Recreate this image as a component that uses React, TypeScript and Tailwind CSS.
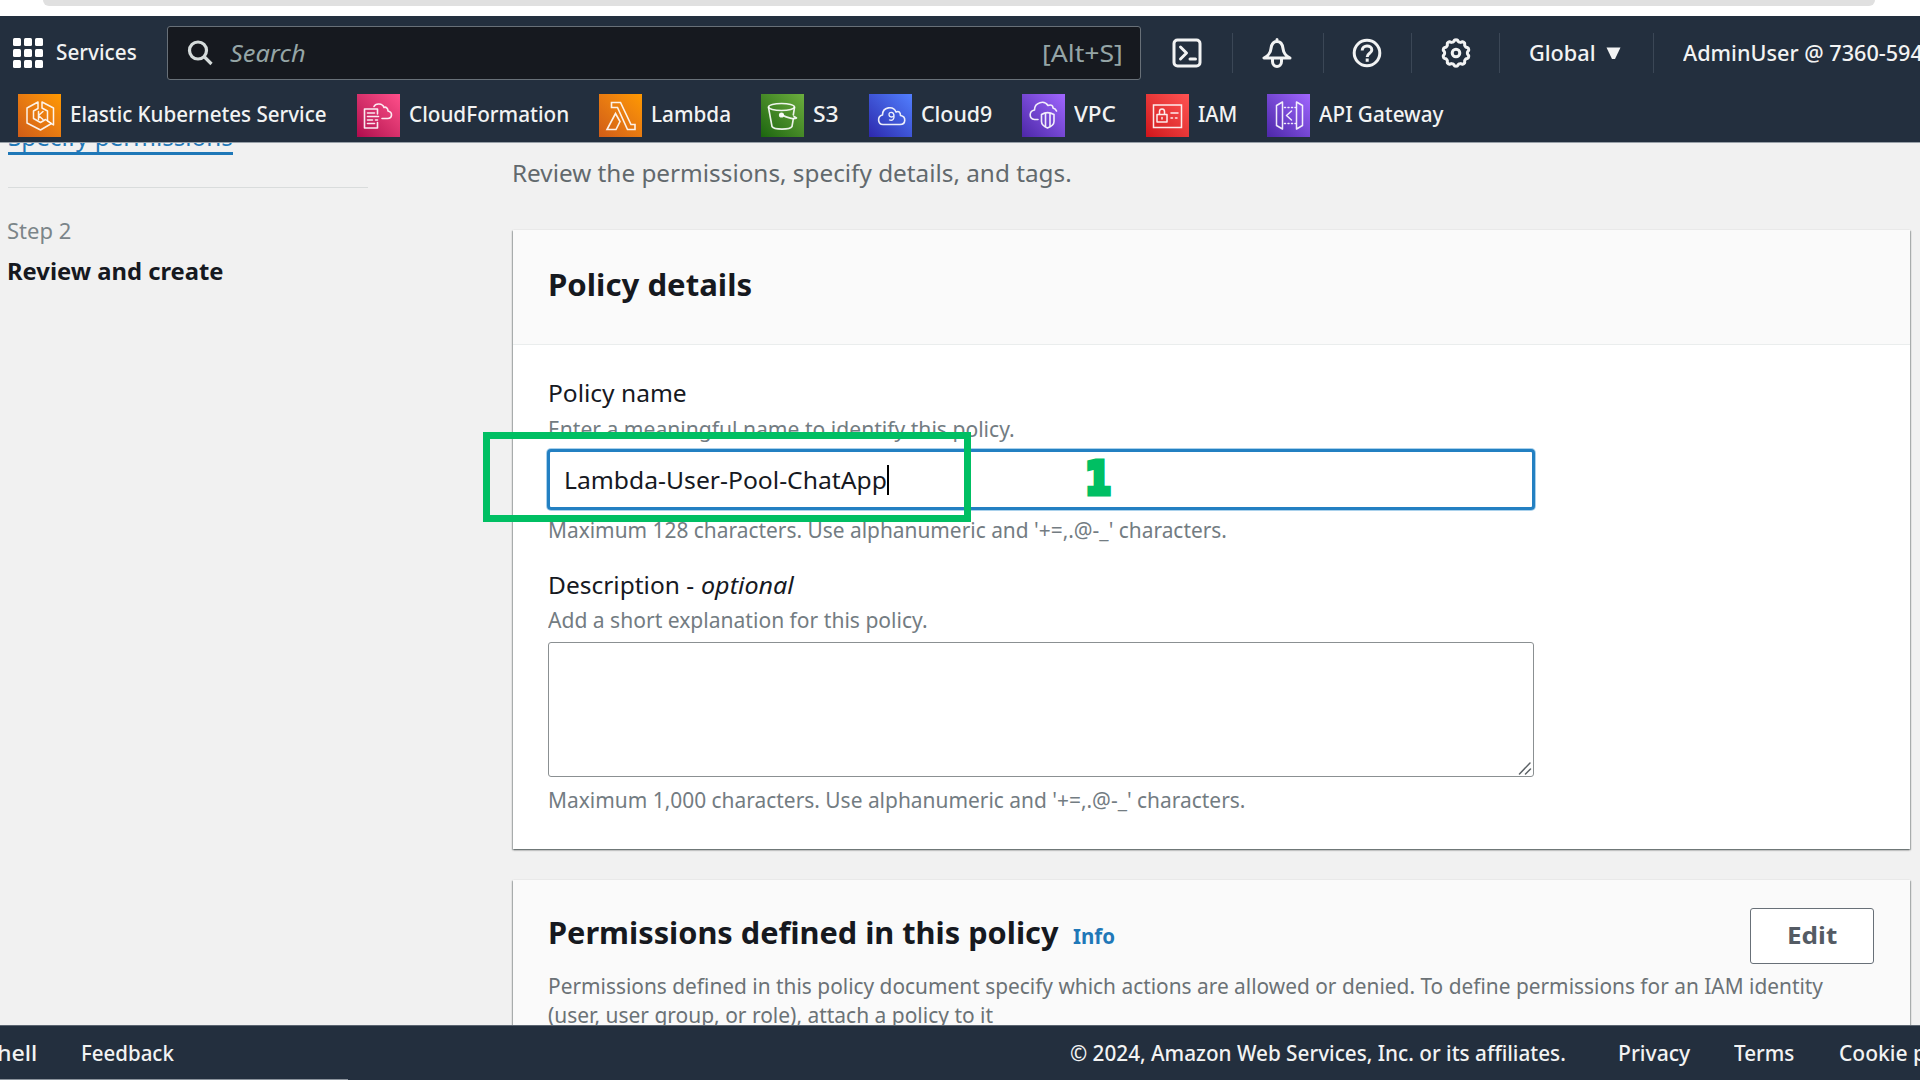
import { useLayoutEffect, useRef, useState, type ReactNode } from 'react';

/** Single line of text condensed or widened to fill the width of its box. */
function Fit({ className = '', children }: { className?: string; children: ReactNode }) {
  const box = useRef<HTMLSpanElement>(null);
  const inner = useRef<HTMLSpanElement>(null);
  const [scale, setScale] = useState(1);
  useLayoutEffect(() => {
    if (box.current && inner.current) {
      setScale(box.current.clientWidth / inner.current.offsetWidth);
    }
  }, []);
  return (
    <span ref={box} className={`block shrink-0 whitespace-nowrap ${className}`}>
      <span ref={inner} className="inline-block origin-left" style={{ transform: `scaleX(${scale})` }}>
        {children}
      </span>
    </span>
  );
}

const line = { fill: 'none', stroke: 'currentColor', strokeLinejoin: 'round', strokeLinecap: 'round' } as const;

function EksIcon() {
  return (
    <svg viewBox="0 0 43 43" className="size-[43px]" {...line} strokeWidth="1.5">
      <path d="M20 8 9 14v15l13.500 7 11-6.500-6-4-5 3-7-4V17l4.500-2.500z" />
      <path d="M24 8l11.500 6v17l-6-4V17L24 14z" />
      <path d="M20.500 17.500v8M25 17.500l-4.500 4 4.500 4" />
    </svg>
  );
}
function CloudFormationIcon() {
  return (
    <svg viewBox="0 0 43 43" className="size-[43px]" {...line} strokeWidth="1.6">
      <path d="M20.500 20V15H7.500V34H20.500V28.500" />
      <path d="M10.500 19h7M10.500 22.500h11M10.500 26h5M18.500 26h2M10.500 29.500h7" />
      <path d="M17 12.500c1.500-3.500 8.500-3.500 10 1 1.500-1 4 .5 4 3.500 5 1 4.500 7.500-.5 7.500H25" />
    </svg>
  );
}
function LambdaIcon() {
  return (
    <svg viewBox="0 0 43 43" className="size-[43px]" {...line} strokeWidth="1.6" strokeLinejoin="miter">
      <path d="M12.500 8.500h9l10.500 22h4v5h-7.500L18.500 13.500h-6z" />
      <path d="M16.500 19.500 21 27.500 17 35.500H8z" />
    </svg>
  );
}
function S3Icon() {
  return (
    <svg viewBox="0 0 43 43" className="size-[43px]" {...line} strokeWidth="1.6">
      <ellipse cx="20.500" cy="13" rx="13" ry="3.500" />
      <path d="M7.500 13.500 11 32.500c2 3.500 18 3.500 20 0l1.300-7.500M33.500 13.500 32.300 21" />
      <circle cx="20.500" cy="21" r="1.800" fill="currentColor" />
      <path d="M21 21c5 2.500 12 4.500 14.500 3L33 22.500" />
    </svg>
  );
}
function Cloud9Icon() {
  return (
    <svg viewBox="0 0 43 43" className="size-[43px]" {...line} strokeWidth="1.6">
      <path d="M14 30.500c-5.500 0-6-8.500-.5-9.500 0-8.500 11-9.500 13.500-3 3-1.500 4.500.5 4.500 3.500 6 1 5.500 9-.5 9z" />
      <path d="M20.500 26c3 1 5-1 4.500-4.500-.3-4-5-4-5-1s4.500 3.500 5 .5" strokeWidth="1.300" />
    </svg>
  );
}
function VpcIcon() {
  return (
    <svg viewBox="0 0 43 43" className="size-[43px]" {...line} strokeWidth="1.600">
      <path d="M16 25.500h-3.500c-6-1-5.500-8.500 0-9.500 0-8 10-10 13.500-4.500 3.500-1.500 5 .5 5 2.500 2 .5 3 1.500 3.500 3" />
      <path d="M19.500 20.500c4-2.500 8-2.500 12.500 0v7c0 3-2.500 5-6.500 6.500-3.500-1.500-6-3.500-6-6.500z" />
      <path d="M23.500 20v12M28 20v12" />
    </svg>
  );
}
function IamIcon() {
  return (
    <svg viewBox="0 0 43 43" className="size-[43px]" {...line} strokeWidth="1.500">
      <path d="M7.500 11h28v22.500h-28z" strokeLinejoin="miter" />
      <path d="M11 20.500h10V28H11zM13.500 20.500v-3c0-3.500 5-3.500 5 0v3M16 23.500v1.500" />
      <path d="M25 19h7M25 24h1.500M29.500 24H31" />
    </svg>
  );
}
function ApiGatewayIcon() {
  return (
    <svg viewBox="0 0 43 43" className="size-[43px]" {...line} strokeWidth="1.500">
      <path d="M15.500 8 9.500 11.500v20l6 3.500zM29.500 8l6 3.500v20l-6 3.500z" />
      <path d="M24.500 17 19.500 21.500l5 4.500" />
      <path d="M17.500 13.500h11M17.500 29.500h11" strokeDasharray="1 2.500" />
    </svg>
  );
}

const orange = 'from-[#d05c17] to-[#ff9900]';
const purple = 'from-[#4d27a8] to-[#a166ff]';
const favorites = [
  { name: 'Elastic Kubernetes Service', icon: <EksIcon />, tint: orange, width: 'w-[257px]' },
  { name: 'CloudFormation', icon: <CloudFormationIcon />, tint: 'from-[#b0084d] to-[#ff4f8b]', width: 'w-[160px]' },
  { name: 'Lambda', icon: <LambdaIcon />, tint: orange, width: 'w-[80px]' },
  { name: 'S3', icon: <S3Icon />, tint: 'from-[#1b660f] to-[#6cae3e]', width: 'w-[26px]' },
  { name: 'Cloud9', icon: <Cloud9Icon />, tint: 'from-[#2e27ad] to-[#527fff]', width: 'w-[71px]' },
  { name: 'VPC', icon: <VpcIcon />, tint: purple, width: 'w-[42px]' },
  { name: 'IAM', icon: <IamIcon />, tint: 'from-[#d0121a] to-[#ff5252]', width: 'w-[39px]' },
  { name: 'API Gateway', icon: <ApiGatewayIcon />, tint: purple, width: 'w-[125px]' },
];

function GearIcon() {
  const outline = Array.from({ length: 97 }, (_, i) => {
    const a = (i / 96) * Math.PI * 2;
    const r = 12.300 + 0.900 * Math.tanh(2.200 * Math.cos(a * 10));
    return `${(15 + r * Math.sin(a)).toFixed(2)},${(15 - r * Math.cos(a)).toFixed(2)}`;
  }).join(' ');
  return (
    <svg viewBox="0 0 30 30" className="size-[30px]" {...line} strokeWidth="3">
      <polygon points={outline} />
      <circle cx="15" cy="15" r="3.800" />
    </svg>
  );
}

function Divider({ className }: { className: string }) {
  return <div className={`h-10 w-px shrink-0 bg-[#3b4756] ${className}`} />;
}

function Header() {
  return (
    <header className="h-[127px] shrink-0 border-b border-[#98a0a8] bg-[#232f3e] font-medium text-[#f2f3f3]">
      <div className="flex h-[74px] items-center">
        <div className="ml-[13px] grid w-[30px] shrink-0 grid-cols-3 gap-[3px]">
          {Array.from({ length: 9 }, (_, i) => (
            <span key={i} className="size-2 rounded-[1.500px] bg-white" />
          ))}
        </div>
        <Fit className="ml-[13px] w-[81px] pb-[3px] text-[22px]">Services</Fit>
        <div className="ml-[30px] flex h-[54px] w-[974px] shrink-0 items-center rounded-[3px] border border-[#687078] bg-[#16191f] text-2xl font-normal text-[#95a5a6]">
          <svg viewBox="0 0 26 26" className="ml-[19px] size-[26px] text-[#d5dbdb]" {...line} strokeWidth="3.200" strokeLinecap="butt">
            <circle cx="11" cy="10.500" r="8.500" />
            <path d="m17 16.500 7.500 7.500" />
          </svg>
          <Fit className="ml-[17px] w-[76px] italic">Search</Fit>
          <Fit className="mr-[17px] ml-auto w-[81px]">[Alt+S]</Fit>
        </div>
        <svg viewBox="0 0 30 30" className="ml-[31px] size-[30px] shrink-0" {...line} strokeWidth="3">
          <rect x="2" y="2" width="26" height="26" rx="3.500" />
          <path d="m8.500 9 6 6-6 6M18 21h5.500" />
        </svg>
        <Divider className="ml-[30px]" />
        <svg viewBox="0 0 30 30" className="ml-[29px] size-[30px] shrink-0" {...line} strokeWidth="3">
          <path d="M15 3.500c-3.500 0-5.500 3-6 7C8.500 15.500 6.500 17.500 2 20h26c-4.500-2.500-6.500-4.500-7-9.500-.5-4-2.500-7-6-7zM15 1.500v2" />
          <path d="M10.500 20.500v3c0 6.500 9 6.500 9 0v-3" />
        </svg>
        <Divider className="ml-[31px]" />
        <svg viewBox="0 0 30 30" className="ml-[28px] size-[30px] shrink-0" {...line} strokeWidth="3" strokeLinecap="butt">
          <circle cx="15" cy="15" r="12.800" />
          <path d="M10.200 12.500c0-6 9.600-6 9.600-.5 0 3.500-4.600 3-4.600 7M15.200 20.500v3.200" />
        </svg>
        <Divider className="ml-[29px]" />
        <div className="ml-[29px] shrink-0">
          <GearIcon />
        </div>
        <Divider className="ml-[28px]" />
        <Fit className="ml-[29px] w-[67px] pb-px text-[22px]">Global</Fit>
        <svg viewBox="0 0 15 13" className="ml-2.5 h-[13px] w-[15px] shrink-0" fill="currentColor">
          <path d="M.5.5h14l-5.500 11.500h-3z" />
        </svg>
        <Divider className="ml-[32px]" />
        <Fit className="ml-[29px] w-[240px] pb-px text-[22px]">AdminUser @ 7360-594</Fit>
      </div>
      <nav className="flex h-[50px] items-center pl-[18px]">
        {favorites.map((f) => (
          <div key={f.name} className="mr-[30px] flex shrink-0 items-center">
            <div className={`size-[43px] bg-linear-to-tr text-white/90 ${f.tint}`}>{f.icon}</div>
            <Fit className={`ml-[9px] pb-1 text-[22px] ${f.width}`}>{f.name}</Fit>
          </div>
        ))}
      </nav>
    </header>
  );
}

function Sidebar() {
  return (
    <aside className="ml-[7px] w-[361px] shrink-0">
      <a className="-mt-[21px] ml-px block w-[225px] border-b-[3px] border-[#1f78b8] text-2xl/[30px] text-[#1f78b8]">
        <Fit className="w-[225px]">Specify permissions</Fit>
      </a>
      <div className="mt-8 ml-px h-px bg-[#d9dcdc]" />
      <Fit className="mt-[27px] w-[64px] text-[22px]/[30px] text-[#7b8589]">Step 2</Fit>
      <Fit className="mt-[11px] w-[217px] text-2xl/[30px] font-bold text-[#16191f]">Review and create</Fit>
    </aside>
  );
}

const card =
  'ml-px w-[1397px] bg-white shadow-[0_1px_2px_rgba(0,10,10,0.45),1px_1px_1px_rgba(0,20,20,0.18),-1px_1px_1px_rgba(0,20,20,0.18)]';
const hint = 'text-[22px]/[30px] text-[#737c82]';

function PolicyDetails() {
  return (
    <section className={`mt-[42px] h-[619px] ${card}`}>
      <div className="h-[115px] border-b border-[#eaeded] bg-[#fafafa] pt-[34px] pl-[35px]">
        <Fit className="w-[204px] text-[31px]/[40px] font-bold text-[#16191f]">Policy details</Fit>
      </div>
      <div className="relative pt-8 pl-[35px]">
        <Fit className="w-[139px] text-2xl/[32px] text-[#16191f]">Policy name</Fit>
        <Fit className={`mt-1 w-[467px] ${hint}`}>Enter a meaningful name to identify this policy.</Fit>
        <div className="mt-1.5 -ml-px flex h-[61px] w-[988px] items-center rounded-[4px] border-[3px] border-[#2380c2] bg-white pl-3.5 text-2xl text-[#16191f] shadow-[0_0_0_1px_#a9d1ec]">
          <Fit className="w-[323px]">Lambda-User-Pool-ChatApp</Fit>
          <div className="h-[30px] w-[1.500px] bg-black" />
        </div>
        <Fit className={`mt-1 w-[679px] ${hint}`}>Maximum 128 characters. Use alphanumeric and '+=,.@-_' characters.</Fit>
        <div className="mt-[25px] flex gap-[7px] text-2xl/[32px] text-[#16191f]">
          <Fit className="w-[146px]">Description -</Fit>
          <Fit className="w-[93px] italic">optional</Fit>
        </div>
        <Fit className={`mt-[3px] w-[380px] ${hint}`}>Add a short explanation for this policy.</Fit>
        <div className="mt-2 flex h-[135px] w-[986px] items-end justify-end rounded-[3px] border-[1.500px] border-[#8b9092] bg-white">
          <svg viewBox="0 0 14 14" className="mr-px mb-px size-3.5" {...line} stroke="#5c6266" strokeWidth="1.500">
            <path d="M1.500 13 12 2M7.500 13l5-5" />
          </svg>
        </div>
        <Fit className={`mt-[7px] w-[697px] ${hint}`}>Maximum 1,000 characters. Use alphanumeric and '+=,.@-_' characters.</Fit>

        <div className="absolute top-[87px] -left-[30px] h-[90px] w-[488px] border-[7px] border-[#00bf63]" />
        <div className="absolute top-[114px] left-[572px] h-[40px] w-[26px] text-[45px]/[40px] font-bold text-[#00bf63] [-webkit-text-stroke:5px_#00bf63]">
          <Fit className="w-[26px] font-['DejaVu_Sans']">1</Fit>
        </div>
      </div>
    </section>
  );
}

function Permissions() {
  return (
    <section className={`mt-[31px] h-[240px] ${card}`}>
      <div className="h-full bg-[#fafafa] pt-7 pr-9 pl-[35px]">
        <div className="flex h-[56px] items-start">
          <Fit className="mt-1 w-[510px] text-[31px]/[40px] font-bold text-[#16191f]">Permissions defined in this policy</Fit>
          <Fit className="mt-[8px] ml-[15px] w-[42px] text-[21px]/[40px] font-bold text-[#1f78b8]">Info</Fit>
          <button className="ml-auto flex h-[56px] w-[124px] items-center justify-center rounded-[3px] border-[1.500px] border-[#687078] bg-white pr-[3px] pb-0.5 text-2xl text-[#545b64]">
            <Fit className="w-[50px] font-bold">Edit</Fit>
          </button>
        </div>
        <div className="mt-[7px] text-[22px]/[29px] text-[#6b7276]">
          <Fit className="w-[1275px]">
            Permissions defined in this policy document specify which actions are allowed or denied. To define permissions for an IAM identity
          </Fit>
          <Fit className="w-[445px]">(user, user group, or role), attach a policy to it</Fit>
        </div>
      </div>
    </section>
  );
}

function Footer() {
  return (
    <footer className="flex h-[55px] shrink-0 flex-col border-t border-[#5a6470] bg-[#232f3e] text-[22px]/[52px] font-medium text-[#f2f3f3]">
      <div className="flex h-[53px] w-full">
        <Fit className="-ml-[3px] w-[40px]">hell</Fit>
        <Fit className="ml-11 w-[93px]">Feedback</Fit>
        <Fit className="ml-[896px] w-[496px]">© 2024, Amazon Web Services, Inc. or its affiliates.</Fit>
        <Fit className="ml-[52px] w-[72px]">Privacy</Fit>
        <Fit className="ml-[44px] w-[60px]">Terms</Fit>
        <Fit className="ml-[45px] w-[87px]">Cookie p</Fit>
      </div>
      <div className="h-px w-[348px] shrink-0 bg-[#8b939c]" />
    </footer>
  );
}

export default function App() {
  return (
    <div className="flex h-[1080px] w-[1920px] flex-col overflow-hidden bg-white font-['Noto_Sans',sans-serif]">
      <div className="h-4 shrink-0">
        <div className="ml-[43px] h-1.5 w-[1832px] rounded-b-[14px] bg-[#e0e0e0]" />
      </div>
      <Header />
      <main className="flex h-[882px] shrink-0 overflow-hidden bg-[#f1f1f1]">
        <Sidebar />
        <div className="ml-36 pt-[15px]">
          <Fit className="w-[560px] text-2xl/[30px] text-[#62696d]">Review the permissions, specify details, and tags.</Fit>
          <PolicyDetails />
          <Permissions />
        </div>
      </main>
      <Footer />
    </div>
  );
}
